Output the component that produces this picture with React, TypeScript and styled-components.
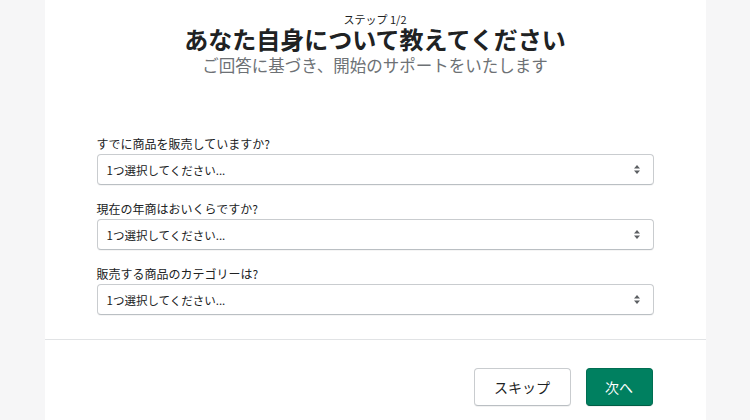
import React from "react";
import styled, { createGlobalStyle } from "styled-components";

const Global = createGlobalStyle`
  html, body { margin: 0; padding: 0; background: #f6f6f7; }
  body { font-family: "Noto Sans CJK JP", "Noto Sans", sans-serif; color: #202223; }
`;

const Page = styled.div`
  width: 750px;
  height: 420px;
  overflow: hidden;
  background: #f6f6f7;
  display: flex;
  justify-content: center;
`;

const Card = styled.div`
  width: 661px;
  background: #ffffff;
  display: flex;
  flex-direction: column;
  height: 460px;
`;

const Body = styled.div`
  padding: 11px 52px 24px;
  display: flex;
  flex-direction: column;
`;

const Header = styled.div`
  display: flex;
  flex-direction: column;
  align-items: center;
  text-align: center;
  margin-bottom: 58px;
`;

const Step = styled.div`
  font-size: 11px;
  line-height: 16px;
  color: #202223;
`;

const Title = styled.h1`
  margin: 0 0 2px;
  font-size: 24px;
  line-height: 24px;
  font-weight: 700;
  color: #202223;
`;

const Subtitle = styled.p`
  margin: 0;
  font-size: 16.5px;
  line-height: 25px;
  color: #6d7175;
`;

const Fields = styled.div`
  display: flex;
  flex-direction: column;
  gap: 16px;
`;

const Field = styled.label`
  display: flex;
  flex-direction: column;
  gap: 2px;
`;

const LabelText = styled.span`
  font-size: 12px;
  line-height: 16px;
  color: #202223;
`;

const SelectBox = styled.div`
  position: relative;
  height: 31px;
  box-sizing: border-box;
  border: 1px solid #c9cccf;
  border-bottom-color: #babfc3;
  border-radius: 4px;
  background: #fff;
  display: flex;
  align-items: center;
  padding: 0 12px 0 9px;
  box-shadow: 0 1px 0 rgba(0, 0, 0, 0.04);
`;

const SelectText = styled.span`
  flex: 1;
  font-size: 11.5px;
  line-height: 16px;
  color: #202223;
`;

const Arrow = styled.svg`
  width: 8px;
  height: 11px;
  flex: none;
`;

const Footer = styled.div`
  border-top: 1px solid #e1e3e5;
  padding: 28px 53px 0;
  display: flex;
  justify-content: flex-end;
  gap: 15px;
`;

const Button = styled.button<{ $primary?: boolean }>`
  height: 38px;
  width: ${(p) => (p.$primary ? "67px" : "97px")};
  box-sizing: border-box;
  padding: 0;
  border-radius: 4px;
  font-family: "Noto Sans CJK JP", "Noto Sans", sans-serif;
  font-size: 14px;
  line-height: 20px;
  cursor: pointer;
  border: 1px solid ${(p) => (p.$primary ? "#006e52" : "#c9cccf")};
  border-bottom-color: ${(p) => (p.$primary ? "#005e46" : "#babfc3")};
  background: ${(p) => (p.$primary ? "#008060" : "#ffffff")};
  color: ${(p) => (p.$primary ? "#ffffff" : "#202223")};
  box-shadow: 0 1px 0 rgba(0, 0, 0, 0.05);
`;

const SelectArrow = () => (
  <Arrow viewBox="0 0 8 11">
    <path d="M4 1 L7 4.5 H1 Z" fill="#5c5f62" />
    <path d="M4 10 L7 6.5 H1 Z" fill="#5c5f62" />
  </Arrow>
);

const questions = [
  "すでに商品を販売していますか?",
  "現在の年商はおいくらですか?",
  "販売する商品のカテゴリーは?",
];

export default function App() {
  return (
    <>
      <Global />
      <Page>
        <Card>
          <Body>
            <Header>
              <Step>ステップ 1/2</Step>
              <Title>あなた自身について教えてください</Title>
              <Subtitle>ご回答に基づき、開始のサポートをいたします</Subtitle>
            </Header>
            <Fields>
              {questions.map((q) => (
                <Field key={q}>
                  <LabelText>{q}</LabelText>
                  <SelectBox>
                    <SelectText>1つ選択してください...</SelectText>
                    <SelectArrow />
                  </SelectBox>
                </Field>
              ))}
            </Fields>
          </Body>
          <Footer>
            <Button>スキップ</Button>
            <Button $primary>次へ</Button>
          </Footer>
        </Card>
      </Page>
    </>
  );
}
